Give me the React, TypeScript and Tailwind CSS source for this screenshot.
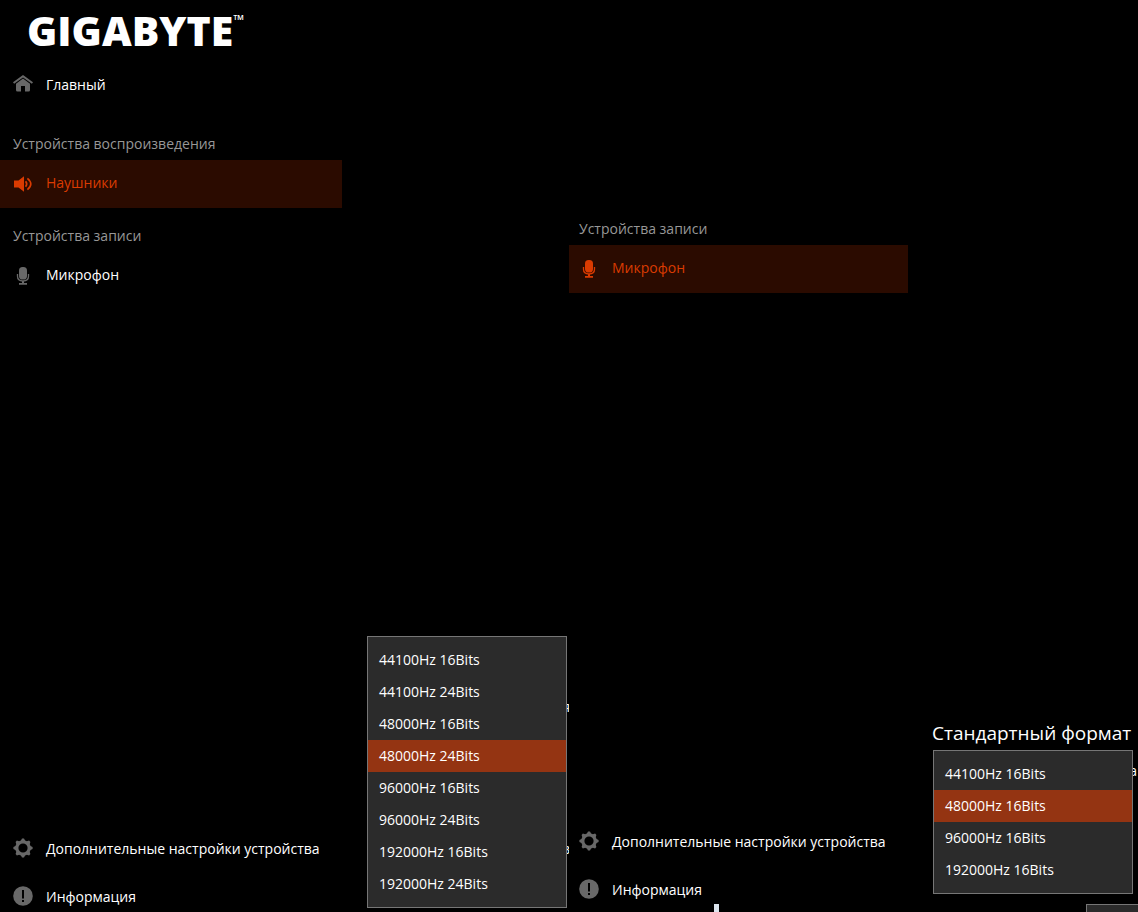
import React from "react";

type IconProps = { className?: string };

function HomeIcon({ className }: IconProps) {
  return (
    <svg viewBox="0 0 20 20" className={className} fill="currentColor" aria-hidden="true">
      <path d="M10 1 0 8.300l1.100 1.500L10 3.500l8.900 6.300L20 8.300z" />
      <path d="M10 4.600 3 9.700V16q0 1.500 1.500 1.500H8V12h4v5.500h3.500Q17 17.500 17 16V9.700z" />
    </svg>
  );
}

function SpeakerIcon({ className }: IconProps) {
  return (
    <svg viewBox="0 0 20 20" className={className} fill="currentColor" aria-hidden="true">
      <path d="M1 6.500h4.500L11 2.300v15.400l-5.500-4.200H1z" />
      <path
        d="M12.600 7.300q2.200 2.700 0 5.400M14.400 4.300q6.800 5.700 0 11.400"
        fill="none"
        stroke="currentColor"
        strokeWidth="1.700"
      />
    </svg>
  );
}

function MicIcon({ className }: IconProps) {
  return (
    <svg viewBox="0 0 20 20" className={className} fill="currentColor" aria-hidden="true">
      <rect x="6" y="1" width="8" height="12.500" rx="3.600" />
      <path
        d="M4.500 8v2.300q0 4.700 5.500 4.700t5.500-4.700V8"
        fill="none"
        stroke="currentColor"
        strokeWidth="1.300"
      />
      <path d="M9 15h2v2h3v1.800H6V17h3z" />
    </svg>
  );
}

function GearIcon({ className }: IconProps) {
  return (
    <svg viewBox="0 0 20 20" className={className} aria-hidden="true">
      <circle cx="10" cy="10" r="6.200" fill="none" stroke="currentColor" strokeWidth="3.200" />
      <path
        d="M7.700 3 9 .4h2L12.300 3zM7.700 17 9 19.600h2l1.300-2.600zM3 7.700.4 9v2L3 12.300zM17 7.700 19.600 9v2L17 12.300zM3.500 6.800 2.600 3.900l1.300-1.300 2.900.9zM13.200 3.500l2.900-.9 1.300 1.300-.9 2.900zM3.500 13.200l-.9 2.900 1.300 1.300 2.900-.9zM16.500 13.200l.9 2.900-1.300 1.300-2.900-.9z"
        fill="currentColor"
      />
    </svg>
  );
}

function InfoIcon({ className }: IconProps) {
  return (
    <svg viewBox="0 0 20 20" className={className} aria-hidden="true">
      <circle cx="10" cy="10" r="9.800" fill="currentColor" />
      <path d="M9 4h2v8.500H9zM9 14h2v2H9z" fill="#000" />
    </svg>
  );
}

type NavItemProps = {
  icon: (props: IconProps) => React.ReactElement;
  label: string;
  device?: boolean;
  active?: boolean;
};

function NavItem({ icon: Icon, label, device = false, active = false }: NavItemProps) {
  return (
    <button
      type="button"
      aria-current={active ? "page" : undefined}
      className={
        active
          ? "flex h-12 w-full items-center gap-[13px] bg-[#2b0b00] pl-[13px] text-left text-[#da3b01]"
          : "flex h-12 w-full items-center gap-[13px] pl-[13px] text-left text-white"
      }
    >
      <Icon className={active ? "size-5 shrink-0" : "size-5 shrink-0 text-[#686868]"} />
      <span className={device ? "pb-0.5 whitespace-nowrap" : "pt-0.5 whitespace-nowrap"}>
        {label}
      </span>
    </button>
  );
}

function SectionTitle({ children }: { children: string }) {
  return <h2 className="pl-[13px] leading-8 whitespace-nowrap text-[#979797]">{children}</h2>;
}

function FooterNav() {
  return (
    <>
      <NavItem icon={GearIcon} label="Дополнительные настройки устройства" />
      <NavItem icon={InfoIcon} label="Информация" />
    </>
  );
}

function FormatMenu({ formats, selected }: { formats: string[]; selected: string }) {
  return (
    <ul
      role="listbox"
      aria-label="Стандартный формат"
      className="relative z-10 w-[200px] border border-[#767676] bg-[#2b2b2b] py-[7px]"
    >
      {formats.map((format) => (
        <li key={format} role="option" aria-selected={format === selected}>
          <button
            type="button"
            className={
              format === selected
                ? "block h-8 w-full bg-[#943412] pl-[11px] text-left text-white"
                : "block h-8 w-full pl-[11px] text-left text-white"
            }
          >
            {format}
          </button>
        </li>
      ))}
    </ul>
  );
}

const playbackFormats = [
  "44100Hz 16Bits",
  "44100Hz 24Bits",
  "48000Hz 16Bits",
  "48000Hz 24Bits",
  "96000Hz 16Bits",
  "96000Hz 24Bits",
  "192000Hz 16Bits",
  "192000Hz 24Bits",
];

const recordingFormats = ["44100Hz 16Bits", "48000Hz 16Bits", "96000Hz 16Bits", "192000Hz 16Bits"];

export default function App() {
  return (
    <main className="grid min-h-screen grid-cols-2 overflow-hidden bg-black font-['Open_Sans','Noto_Sans',sans-serif] text-[14px] leading-5 text-white">
      <section className="grid grid-cols-[342px_1fr] overflow-hidden">
        <nav className="flex flex-col pt-3">
          <h1 className="flex h-12 items-start pl-[27px] text-[41px] leading-[37px] font-extrabold">
            GIGABYTE<span className="text-[14px] leading-4 font-semibold">™</span>
          </h1>
          <NavItem icon={HomeIcon} label="Главный" />
          <div className="pt-5">
            <SectionTitle>Устройства воспроизведения</SectionTitle>
            <NavItem icon={SpeakerIcon} label="Наушники" device active />
          </div>
          <div className="pt-3">
            <SectionTitle>Устройства записи</SectionTitle>
            <NavItem icon={MicIcon} label="Микрофон" device />
          </div>
          <div className="mt-auto -mb-2">
            <FooterNav />
          </div>
        </nav>
        <div className="flex flex-col justify-end pb-1 pl-[25px]">
          <div className="relative w-[200px]">
            <FormatMenu formats={playbackFormats} selected="48000Hz 24Bits" />
            <span className="absolute top-[61px] -right-[3px]">я</span>
            <span className="absolute top-[203px] -right-[3px]">в</span>
          </div>
        </div>
      </section>
      <section className="relative grid grid-cols-[339px_1fr] overflow-hidden">
        <nav className="-ml-[3px] flex flex-col pt-[213px]">
          <SectionTitle>Устройства записи</SectionTitle>
          <NavItem icon={MicIcon} label="Микрофон" device active />
          <div className="mt-auto -mb-px">
            <FooterNav />
          </div>
        </nav>
        <span className="absolute bottom-0 left-[145px] h-2 w-[5px] bg-[#dbe4ee]" />
        <div className="flex flex-col justify-end pl-6">
          <h2 className="pb-[3px] text-[19px] leading-7 whitespace-nowrap">Стандартный формат</h2>
          <div className="relative ml-px w-[200px]">
            <FormatMenu formats={recordingFormats} selected="48000Hz 16Bits" />
            <span className="absolute top-[11px] -right-1">а</span>
          </div>
          <div className="mt-[10px] ml-auto h-2 w-[52px] border-t border-l border-[#767676] bg-[#2b2b2b]" />
        </div>
      </section>
    </main>
  );
}
